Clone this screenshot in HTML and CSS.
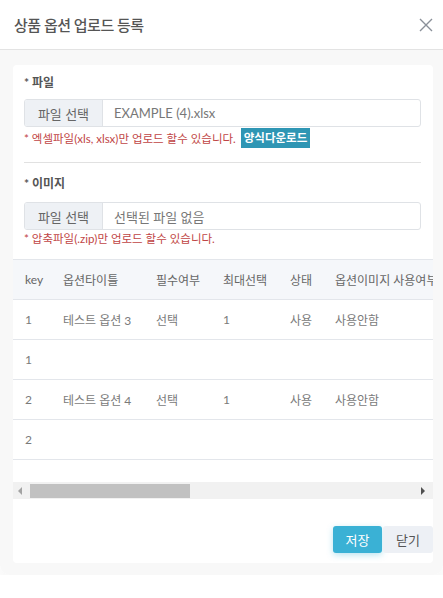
FILE: index.html
```html
<!DOCTYPE html>
<html lang="ko">
<head>
<meta charset="utf-8">
<title>상품 옵션 업로드 등록</title>
<link rel="stylesheet" href="styles.css">
</head>
<body>
<div class="modal">
  <div class="modal-header">
    <h1 class="modal-title">상품 옵션 업로드 등록</h1>
    <button class="close-btn" aria-label="닫기">
      <svg width="14" height="14" viewBox="0 0 14 14"><path d="M1 1L13 13M13 1L1 13" stroke="#8a9099" stroke-width="1.4" fill="none"/></svg>
    </button>
  </div>
  <div class="modal-body">
    <div class="card">
      <div class="form">
        <div class="field-label">* 파일</div>
        <div class="file-input">
          <span class="file-btn">파일 선택</span>
          <span class="file-name">EXAMPLE (4).xlsx</span>
        </div>
        <div class="help-row">
          <span class="help">* 엑셀파일(xls, xlsx)만 업로드 할수 있습니다.</span>
          <span class="download">양식다운로드</span>
        </div>
        <div class="divider"></div>
        <div class="field-label second">* 이미지</div>
        <div class="file-input">
          <span class="file-btn">파일 선택</span>
          <span class="file-name">선택된 파일 없음</span>
        </div>
        <div class="help single">* 압축파일(.zip)만 업로드 할수 있습니다.</div>
      </div>
      <div class="table-wrap">
        <table class="grid">
          <colgroup>
            <col class="c-key"><col class="c-title"><col class="c-req"><col class="c-max"><col class="c-state"><col class="c-img">
          </colgroup>
          <thead>
            <tr><th>key</th><th>옵션타이틀</th><th>필수여부</th><th>최대선택</th><th>상태</th><th>옵션이미지 사용여부</th></tr>
          </thead>
          <tbody>
            <tr><td>1</td><td>테스트 옵션 3</td><td>선택</td><td>1</td><td>사용</td><td>사용안함</td></tr>
            <tr><td>1</td><td></td><td></td><td></td><td></td><td></td></tr>
            <tr><td>2</td><td>테스트 옵션 4</td><td>선택</td><td>1</td><td>사용</td><td>사용안함</td></tr>
            <tr><td>2</td><td></td><td></td><td></td><td></td><td></td></tr>
          </tbody>
        </table>
      </div>
      <div class="scrollbar">
        <span class="arrow left"></span>
        <span class="thumb"></span>
        <span class="arrow right"></span>
      </div>
      <div class="card-foot">
        <button class="btn btn-save">저장</button>
        <button class="btn btn-close">닫기</button>
      </div>
    </div>
  </div>
</div>
</body>
</html>
```
FILE: styles.css
```css
* { box-sizing: border-box; }
html, body { margin: 0; padding: 0; background: #ffffff; }
body {
  font-family: "Lato", "Noto Sans CJK KR", sans-serif;
  color: #666;
  overflow: hidden;
}
.modal {
  width: 443px;
  background: #fff;
  border-radius: 0 0 10px 10px;
  box-shadow: 0 8px 22px rgba(0,0,0,0.05);
}
.modal-header {
  height: 50px;
  display: flex;
  align-items: center;
  justify-content: space-between;
  padding: 0 9px 0 14px;
  border-bottom: 1px solid #e3e3e3;
}
.modal-title {
  margin: 0;
  font-size: 15px;
  font-weight: 500;
  color: #555;
  letter-spacing: -0.5px;
}
.close-btn {
  border: 0;
  background: none;
  padding: 0;
  width: 16px;
  height: 16px;
  display: flex;
  align-items: center;
  justify-content: center;
}
.modal-body {
  background: #f8f8f8;
  padding: 15px 10px 12px 13px;
  border-radius: 0 0 10px 10px;
}
.card {
  background: #fff;
  border-radius: 4px;
  padding-bottom: 10px;
}
.form {
  padding: 9px 12px 0 11px;
}
.field-label {
  font-size: 12px;
  font-weight: 700;
  line-height: 18px;
  color: #555;
  margin-bottom: 7px;
}
.field-label.second {
  margin-top: 12px;
  margin-bottom: 9px;
}
.file-input {
  display: flex;
  height: 28px;
  border: 1px solid #dfe2e6;
  border-radius: 3px;
  overflow: hidden;
  font-size: 13px;
}
.file-btn {
  width: 78px;
  flex: none;
  background: #eef1f5;
  border-right: 1px solid #dfe2e6;
  color: #666;
  display: flex;
  align-items: center;
  justify-content: center;
}
.file-name {
  display: flex;
  align-items: center;
  padding-left: 11px;
  color: #777;
}
.help-row {
  display: flex;
  align-items: center;
  margin-top: 1px;
  height: 20px;
}
.help {
  font-size: 11.5px;
  color: #bf4545;
  letter-spacing: 0;
}
.help.single {
  line-height: 18px;
}
.download {
  margin-left: 5px;
  height: 20px;
  padding: 0 3px;
  background: #2f96b4;
  color: #fff;
  font-size: 11.5px;
  font-weight: 700;
  line-height: 20px;
}
.divider {
  height: 1px;
  background: #e1e1e1;
  margin-top: 14px;
}
.table-wrap {
  margin-top: 11px;
  overflow: hidden;
  padding-bottom: 22px;
}
.grid {
  border-collapse: collapse;
  width: 1024px;
  table-layout: fixed;
  font-size: 12px;
}
.c-key { width: 38px; }
.c-title { width: 93px; }
.c-req { width: 67px; }
.c-max { width: 67px; }
.c-state { width: 45px; }
.grid th, .grid td {
  height: 40px;
  padding: 0 0 0 12px;
  text-align: left;
  border-top: 1px solid #e3e6eb;
  border-bottom: 1px solid #e3e6eb;
  white-space: nowrap;
  font-weight: 400;
}
.grid th {
  background: #f5f7fa;
  color: #666;
}
.grid td {
  color: #7a7a7a;
}
.scrollbar {
  height: 17px;
  background: #f1f1f1;
  display: flex;
  align-items: center;
  padding: 0 4px;
}
.arrow {
  width: 0;
  height: 0;
  border-top: 4px solid transparent;
  border-bottom: 4px solid transparent;
}
.arrow.left {
  border-right: 4px solid #a3a3a3;
  margin-left: 1px;
}
.arrow.right {
  border-left: 4px solid #505050;
  margin-left: auto;
  margin-right: 4px;
}
.thumb {
  width: 160px;
  height: 14px;
  background: #c1c1c1;
  margin-left: 8px;
}
.card-foot {
  display: flex;
  justify-content: flex-end;
  gap: 1px;
  margin-top: 27px;
}
.btn {
  height: 27px;
  border: 0;
  border-radius: 3px;
  font-family: "Noto Sans CJK KR", sans-serif;
  font-size: 13px;
  padding: 0;
}
.btn-save {
  width: 49px;
  background: #3ab1d5;
  color: #fff;
  box-shadow: 0 2px 6px rgba(58,177,213,0.35);
}
.btn-close {
  width: 50px;
  background: #edf0f5;
  color: #555;
}
```
